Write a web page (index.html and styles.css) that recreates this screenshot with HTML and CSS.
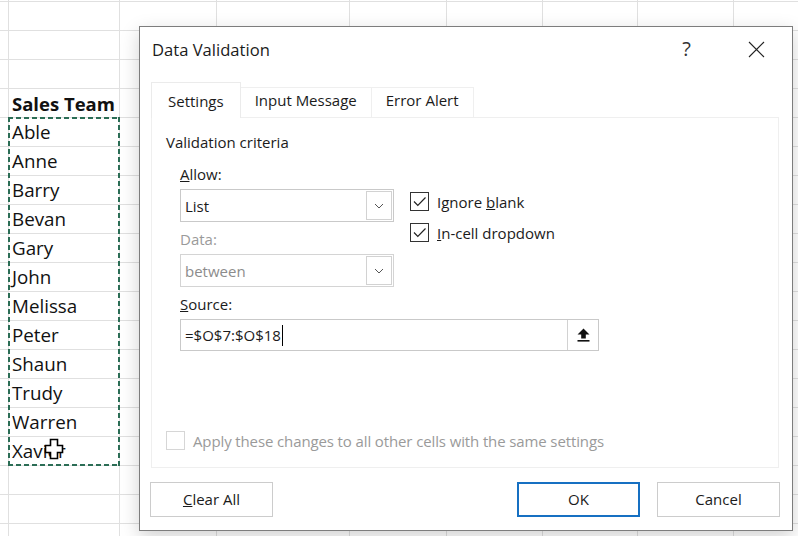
FILE: index.html
```html
<!DOCTYPE html>
<html lang="en">
<head>
    <meta charset="UTF-8">
    <title>Data Validation</title>
    <link rel="stylesheet" href="styles.css">
</head>
<body>

<div class="sheet">
    <div class="col col-a"></div>
    <div class="col col-b">
        <div class="cell head-cell">Sales Team</div>
        <div class="range">
            <div class="cell">Able</div>
            <div class="cell">Anne</div>
            <div class="cell">Barry</div>
            <div class="cell">Bevan</div>
            <div class="cell">Gary</div>
            <div class="cell">John</div>
            <div class="cell">Melissa</div>
            <div class="cell">Peter</div>
            <div class="cell">Shaun</div>
            <div class="cell">Trudy</div>
            <div class="cell">Warren</div>
            <div class="cell">Xavier</div>
        </div>
    </div>
    <div class="col col-c"></div>
    <div class="col col-d"></div>
    <div class="col col-e"></div>
    <div class="col col-f"></div>
    <div class="col col-g"></div>
    <div class="col col-h"></div>

    <svg class="cursor" width="20" height="22" viewBox="0 0 20 22">
        <path d="M6.5 1.5h7v6h5v7h-5v6h-7v-6h-5v-7h5z" fill="#fff" stroke="#000" stroke-width="1.6"/>
    </svg>

    <div class="dialog">
        <div class="dlg-head">
            <div class="dlg-title">Data Validation</div>
            <div class="help">?</div>
            <svg class="close" width="17" height="17" viewBox="0 0 17 17">
                <path d="M1 1L16 16M16 1L1 16" stroke="#222" stroke-width="1.1"/>
            </svg>
        </div>

        <div class="tabs">
            <div class="tab active">Settings</div>
            <div class="tab">Input Message</div>
            <div class="tab">Error Alert</div>
        </div>

        <div class="panel">
            <div class="group-title">Validation criteria</div>
            <div class="criteria">
                <div class="fields">
                    <div class="label"><u>A</u>llow:</div>
                    <div class="combo">
                        <span>List</span>
                        <div class="drop">
                            <svg width="10" height="6" viewBox="0 0 10 6"><path d="M1 1l4 4 4-4" fill="none" stroke="#555" stroke-width="1"/></svg>
                        </div>
                    </div>
                    <div class="label disabled">Data:</div>
                    <div class="combo disabled">
                        <span>between</span>
                        <div class="drop">
                            <svg width="10" height="6" viewBox="0 0 10 6"><path d="M1 1l4 4 4-4" fill="none" stroke="#555" stroke-width="1"/></svg>
                        </div>
                    </div>
                </div>
                <div class="checks">
                    <div class="check-row">
                        <span class="box"><svg width="17" height="17" viewBox="0 0 17 17"><path d="M3 8.5l3.8 3.8L14.5 4.5" fill="none" stroke="#222" stroke-width="1.2"/></svg></span>
                        <span>Ignore <u>b</u>lank</span>
                    </div>
                    <div class="check-row">
                        <span class="box"><svg width="17" height="17" viewBox="0 0 17 17"><path d="M3 8.5l3.8 3.8L14.5 4.5" fill="none" stroke="#222" stroke-width="1.2"/></svg></span>
                        <span><u>I</u>n-cell dropdown</span>
                    </div>
                </div>
            </div>
            <div class="label source-label"><u>S</u>ource:</div>
            <div class="source">
                <div class="source-text">=$O$7:$O$18<span class="caret"></span></div>
                <div class="ref-btn">
                    <svg width="13" height="14" viewBox="0 0 13 14">
                        <path d="M6.5 0.5L12.5 6.5H8.8V10.5H4.2V6.5H0.5Z" fill="#111"/>
                        <rect x="0.5" y="12" width="12" height="1.6" fill="#111"/>
                    </svg>
                </div>
            </div>
            <div class="check-row apply">
                <span class="box"></span>
                <span>Apply these changes to all other cells with the same settings</span>
            </div>
        </div>

        <div class="buttons">
            <div class="btn"><u>C</u>lear All</div>
            <div class="spacer"></div>
            <div class="btn primary">OK</div>
            <div class="btn">Cancel</div>
        </div>
    </div>
</div>

</body>
</html>
```

FILE: styles.css
```css
* {
    box-sizing: border-box;
}

body {
    margin: 0;
    background: #fff;
    overflow: hidden;
}

.sheet {
    position: relative;
    display: flex;
    width: 798px;
    height: 536px;
    font-family: 'Open Sans', sans-serif;
    background-image: repeating-linear-gradient(to bottom, #e0e0e0 0 1px, transparent 1px 29px);
    background-position: 0 1px;
}

.col {
    flex: none;
    height: 100%;
    border-right: 1px solid #e0e0e0;
}
.col-a { width: 9px; }
.col-b { width: 111px; padding-top: 88px; }
.col-c { width: 97px; }
.col-d { width: 133px; }
.col-e { width: 97px; }
.col-f { width: 96px; }
.col-g { width: 95px; }
.col-h { width: 96px; }

.cell {
    height: 29px;
    line-height: 29px;
    padding: 1px 0 0 3px;
    font-size: 18.8px;
    color: #111;
    white-space: nowrap;
}
.head-cell {
    font-weight: 700;
    font-size: 18.5px;
}

.range {
    position: relative;
}
.range::after {
    content: "";
    position: absolute;
    top: 0;
    left: -1px;
    right: -1px;
    bottom: -1px;
    background:
        repeating-linear-gradient(to right, #2b6d55 0 5px, transparent 5px 8px) top left / 100% 2px no-repeat,
        repeating-linear-gradient(to right, #2b6d55 0 5px, transparent 5px 8px) bottom left / 100% 2px no-repeat,
        repeating-linear-gradient(to bottom, #2b6d55 0 5px, transparent 5px 8px) top left / 2px 100% no-repeat,
        repeating-linear-gradient(to bottom, #2b6d55 0 5px, transparent 5px 8px) top right / 2px 100% no-repeat;
}

.cursor {
    position: absolute;
    left: 44px;
    top: 438px;
}

/* dialog */
.dialog {
    position: absolute;
    left: 139px;
    top: 26px;
    width: 654px;
    height: 505px;
    display: flex;
    flex-direction: column;
    background: #fff;
    border: 1px solid #7d7d7d;
    box-shadow: 0 6px 18px rgba(0, 0, 0, 0.18);
    font-family: 'Open Sans', sans-serif;
    font-size: 15px;
    color: #1b1b1b;
}

.dlg-head {
    display: flex;
    align-items: flex-start;
    height: 55px;
    padding: 13px 27px 0 12px;
}
.dlg-title {
    flex: 1;
    font-size: 16.6px;
    line-height: 20px;
}
.help {
    font-size: 20px;
    line-height: 22px;
    margin-top: -2px;
    margin-right: 57px;
    color: #333;
}
.close {
    margin-top: 1px;
}

.tabs {
    display: flex;
    align-items: flex-end;
    height: 35px;
    margin-left: 11px;
    position: relative;
    z-index: 1;
}
.tab {
    height: 30px;
    padding: 2px 14px 0;
    line-height: 20px;
    border: 1px solid #efefef;
    border-bottom: none;
    border-left: none;
}
.tab.active {
    height: 36px;
    margin-bottom: -1px;
    padding: 8px 16px 0;
    border-left: 1px solid #ebebeb;
    border-color: #ebebeb;
    background: #fff;
}

.panel {
    display: flex;
    flex-direction: column;
    height: 351px;
    margin: 0 13px 0 11px;
    padding: 14px 14px 17px;
    border: 1px solid #efefef;
}
.group-title {
    line-height: 20px;
}

.criteria {
    display: flex;
    margin-top: 12px;
    padding-left: 14px;
}
.fields {
    width: 214px;
}
.label {
    line-height: 20px;
    margin-bottom: 5px;
}
.label.disabled {
    color: #9a9a9a;
    margin-top: 7px;
}

.combo {
    display: flex;
    align-items: center;
    height: 33px;
    padding: 1px 1px 1px 4px;
    border: 1px solid #c9c9c9;
}
.combo span {
    flex: 1;
}
.combo.disabled {
    color: #8c8c8c;
    border-color: #d4d4d4;
}
.drop {
    display: flex;
    align-items: center;
    justify-content: center;
    width: 26px;
    height: 100%;
    border: 1px solid #d2d2d2;
}

.checks {
    margin: 28px 0 0 16px;
}
.check-row {
    display: flex;
    align-items: center;
    gap: 8px;
    height: 19px;
    margin-bottom: 12px;
    white-space: nowrap;
}
.box {
    flex: none;
    display: flex;
    width: 19px;
    height: 19px;
    border: 1px solid #333;
    background: #fff;
}

.source-label {
    margin-top: 7px;
    padding-left: 14px;
}
.source {
    display: flex;
    height: 32px;
    width: 419px;
    margin-left: 14px;
    border: 1px solid #c9c9c9;
}
.source-text {
    flex: 1;
    display: flex;
    align-items: center;
    padding-left: 4px;
}
.caret {
    display: inline-block;
    width: 1px;
    height: 21px;
    margin-left: 1px;
    background: #000;
}
.ref-btn {
    display: flex;
    align-items: center;
    justify-content: center;
    width: 31px;
    border-left: 1px solid #d2d2d2;
}

.apply {
    margin-top: auto;
    margin-bottom: 0;
    color: #9a9a9a;
    letter-spacing: -0.12px;
}
.apply .box {
    border-color: #d6d6d6;
}

.buttons {
    display: flex;
    gap: 17px;
    margin-top: 14px;
    padding: 0 12px 0 10px;
}
.spacer {
    flex: 1;
}
.btn {
    width: 123px;
    height: 35px;
    line-height: 33px;
    text-align: center;
    border: 1px solid #cccccc;
    background: #fff;
}
.btn.primary {
    border: 2px solid #1670c2;
    line-height: 31px;
}
```
